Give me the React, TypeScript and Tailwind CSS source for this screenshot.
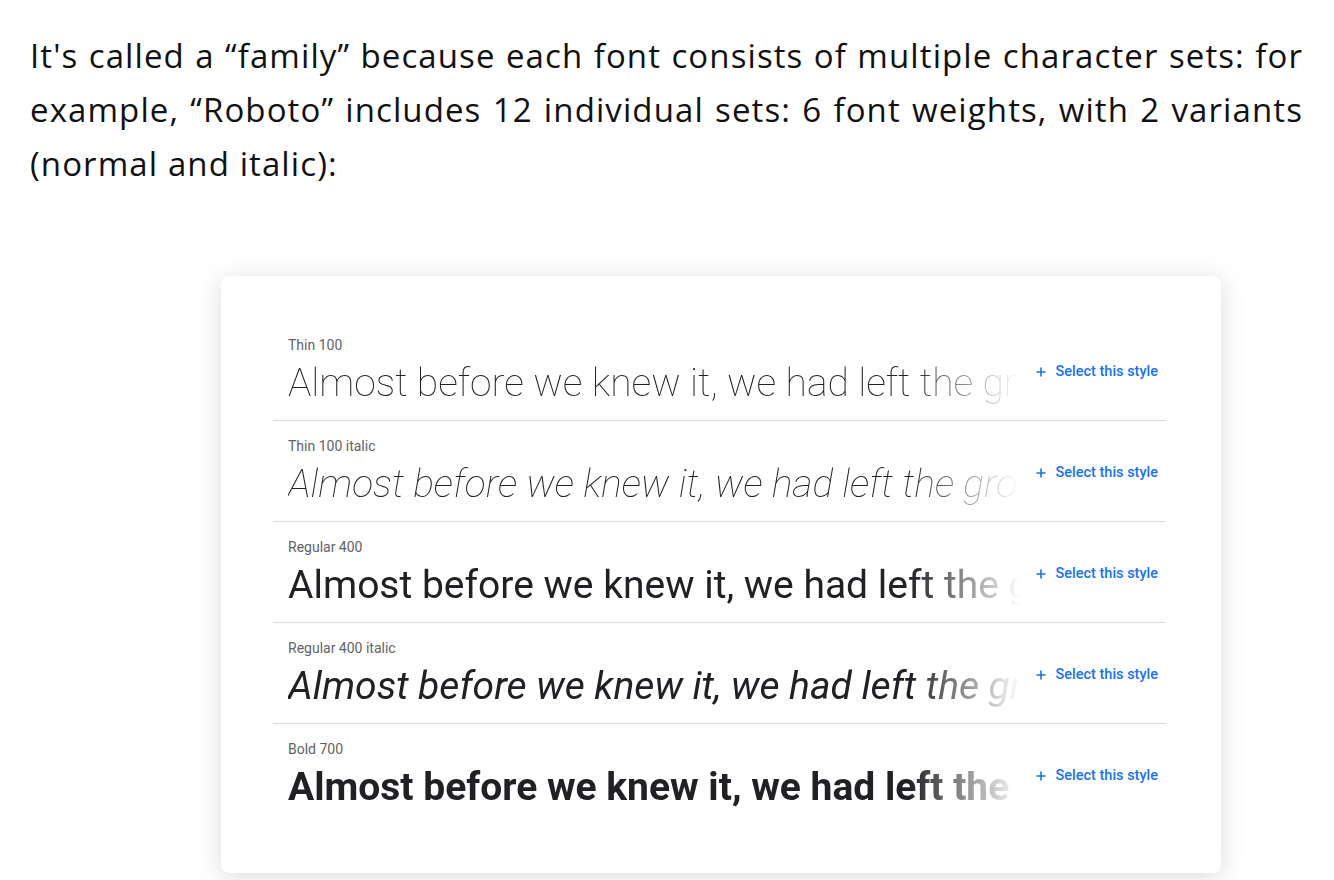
import React from 'react';

const styles = [
  { id: 'thin', label: 'Thin 100', className: 'font-thin' },
  { id: 'thin-italic', label: 'Thin 100 italic', className: 'font-thin italic' },
  { id: 'regular', label: 'Regular 400', className: 'font-normal' },
  { id: 'regular-italic', label: 'Regular 400 italic', className: 'font-normal italic' },
  { id: 'bold', label: 'Bold 700', className: 'font-bold' },
];

const SAMPLE = 'Almost before we knew it, we had left the ground.';

const PlusIcon = () => (
  <svg width="10" height="10" viewBox="0 0 10 10" className="shrink-0">
    <path d="M5 0.5v9M0.5 5h9" stroke="#1a73e8" strokeWidth="1.6" fill="none" />
  </svg>
);

const StyleRow = ({ label, className, last }: { label: string; className: string; last: boolean }) => (
  <div className={`flex h-[101px] items-center pl-[15px] pr-[8px] ${last ? '' : 'border-b border-[#dadce0]'}`}>
    <div className="flex h-full w-[732px] flex-col pt-[17px]">
      <div className="text-[14px] leading-[16px] text-[#5f6368]">{label}</div>
      <div
        className={`mt-[6px] overflow-hidden whitespace-nowrap text-[39px] leading-[48px] text-[#202124] [mask-image:linear-gradient(to_right,black_calc(100%-110px),transparent_100%)] ${className}`}
      >
        {SAMPLE}
      </div>
    </div>
    <button className="ml-auto mt-[3px] flex items-center gap-[9px] text-[14.5px] font-medium text-[#1a73e8]">
      <PlusIcon />
      Select this style
    </button>
  </div>
);

export default function App() {
  return (
    <div className="min-h-screen bg-white pb-10">
      <p
        className="w-[1273px] pl-[30px] pt-[29px] text-justify text-[33px] leading-[54px] tracking-[1.1px] text-[#111111]"
        style={{ fontFamily: '"Open Sans", Lato, sans-serif', boxSizing: 'content-box' }}
      >
        It's called a “family” because each font consists of multiple character sets: for example, “Roboto” includes 12
        individual sets: 6 font weights, with 2 variants (normal and italic):
      </p>

      <div
        className="ml-[221px] mt-[85px] w-[1000px] rounded-[8px] bg-white px-[52px] pb-[48px] pt-[44px] shadow-[0_4px_26px_rgba(0,0,0,0.15)]"
        style={{ fontFamily: 'Roboto, sans-serif' }}
      >
        <div className="w-[893px]">
          {styles.map((s, i) => (
            <StyleRow key={s.id} label={s.label} className={s.className} last={i === styles.length - 1} />
          ))}
        </div>
      </div>
    </div>
  );
}
